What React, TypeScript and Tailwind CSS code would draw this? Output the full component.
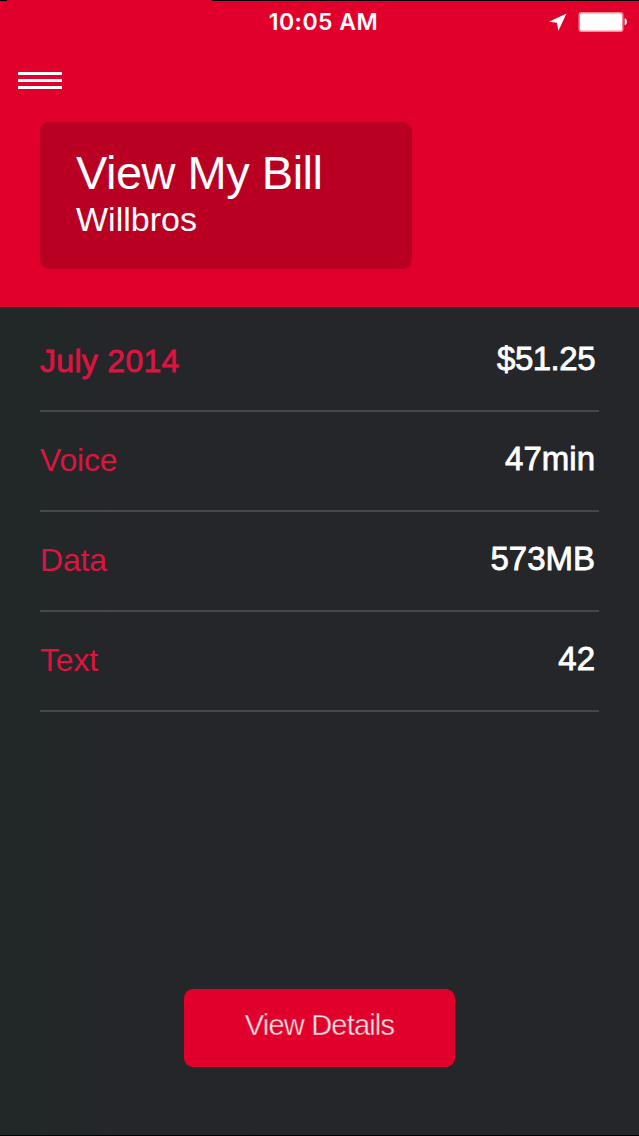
import React from 'react'

interface UsageRowProps {
  label: string
  value: string
  strong?: boolean
}

const rows: UsageRowProps[] = [
  { label: 'July 2014', value: '$51.25', strong: true },
  { label: 'Voice', value: '47min' },
  { label: 'Data', value: '573MB' },
  { label: 'Text', value: '42' },
]

function StatusBar() {
  return (
    <div className="grid h-[43px] grid-cols-[1fr_auto_1fr] items-center pr-3 text-white">
      <div />
      <span className="pl-[20px] font-['Inter',sans-serif] text-[23px] leading-[43px] font-semibold tracking-[0.5px]">10:05 AM</span>
      <div className="flex items-center justify-end gap-[11px]">
        <svg width="19" height="19" viewBox="0 0 19 19" fill="currentColor">
          <path d="M18.5 0.5 L1 8.8 L9 9.8 L10.3 18 Z" />
        </svg>
        <svg className="-mr-[1px]" width="50" height="21" viewBox="0 0 50 21" fill="currentColor">
          <rect x="0.5" y="0" width="45" height="20" rx="3" fill="#ff8794" />
          <rect x="2" y="1.5" width="42" height="17" rx="1.5" />
          <path d="M46.7 6 Q49 7 49 9.7 Q49 12.4 46.7 13.4 Z" />
        </svg>
      </div>
    </div>
  )
}

function UsageRow({ label, value, strong }: UsageRowProps) {
  return (
    <div className="flex h-[100px] justify-between border-b-2 border-[#46474b] pr-[4px] text-[33px] leading-[38px]">
      <span
        className={
          strong
            ? 'pt-[30px] text-[32px] tracking-[0.3px] text-[#dc143f] [-webkit-text-stroke:0.8px_#dc143f]'
            : 'pt-[29px] text-[32px] tracking-[-0.2px] text-[#dc143f]'
        }
      >
        {label}
      </span>
      <span
        className={
          strong
            ? 'pt-[28px] tracking-[-0.5px] text-white [-webkit-text-stroke:0.8px_white]'
            : 'pt-[28px] text-white [-webkit-text-stroke:0.8px_white]'
        }
      >
        {value}
      </span>
    </div>
  )
}

export default function App() {
  return (
    <div className="flex h-[1136px] w-[639px] flex-col border-b border-black bg-linear-to-r from-[#212827] to-[#25262a] to-20% font-['Liberation_Sans',Arial,sans-serif]">
      <header className="h-[307px] bg-[#e1002b]">
        <div className="flex h-px justify-between">
          <div className="w-[7px] bg-black" />
          <div className="w-[427px] bg-black" />
        </div>
        <StatusBar />
        <button aria-label="Menu" className="mt-[28px] ml-[18px] flex w-[44px] flex-col gap-[4px]">
          <span className="h-[3px] w-full bg-white" />
          <span className="h-[3px] w-full bg-white" />
          <span className="h-[3px] w-full bg-white" />
        </button>
        <div className="mt-[33px] ml-10 h-[147px] w-[372px] rounded-[9px] bg-[#b90022] pt-[25px] pl-9 text-white">
          <h1 className="text-[47px] leading-[52px] font-normal tracking-[-0.5px]">View My Bill</h1>
          <h2 className="text-[34px] leading-[40px] font-normal">Willbros</h2>
        </div>
      </header>
      <main className="mx-10 mt-[5px] flex-1">
        {rows.map((row) => (
          <UsageRow key={row.label} {...row} />
        ))}
      </main>
      <button className="mb-[68px] h-[78px] w-[271px] self-center rounded-[9px] bg-[#e1002b] pb-[7px] text-[29px] leading-[34px] tracking-[-0.8px] text-[#ffe3e6] [-webkit-text-stroke:0.4px_#e1002b]">
        View Details
      </button>
    </div>
  )
}
